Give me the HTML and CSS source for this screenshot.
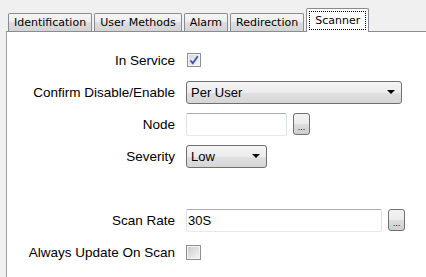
FILE: index.html
```html
<!DOCTYPE html>
<html lang="en">
<head>
  <meta charset="UTF-8" />
  <title>Scanner Properties</title>
  <link rel="stylesheet" href="styles.css">
</head>
<body>
  <div class="window">
    <div class="tabs">
      <div class="tab">Identification</div>
      <div class="tab">User Methods</div>
      <div class="tab">Alarm</div>
      <div class="tab">Redirection</div>
      <div class="tab active"><span class="focus">Scanner</span></div>
    </div>
    <div class="panel">
      <div class="form">
        <div class="label">In Service</div>
        <div class="field">
          <span class="check first">
            <svg width="12" height="12" viewBox="0 0 12 12"><path d="M2.5 6.5 L4.8 9.2 L9.8 2.2" fill="none" stroke="#3b57a3" stroke-width="1.8"/></svg>
          </span>
        </div>

        <div class="label">Confirm Disable/Enable</div>
        <div class="field">
          <div class="select wide">
            <span>Per User</span>
            <svg class="arrow" width="8" height="4" viewBox="0 0 8 4"><polygon points="0,0 8,0 4,4" fill="#000"/></svg>
          </div>
        </div>

        <div class="label">Node</div>
        <div class="field">
          <div class="text node"></div>
          <div class="dots">...</div>
        </div>

        <div class="label">Severity</div>
        <div class="field">
          <div class="select short">
            <span>Low</span>
            <svg class="arrow" width="8" height="4" viewBox="0 0 8 4"><polygon points="0,0 8,0 4,4" fill="#000"/></svg>
          </div>
        </div>

        <div class="spacer"></div>

        <div class="label">Scan Rate</div>
        <div class="field">
          <div class="text rate">30S</div>
          <div class="dots">...</div>
        </div>

        <div class="label">Always Update On Scan</div>
        <div class="field">
          <span class="check"></span>
        </div>
      </div>
    </div>
  </div>
</body>
</html>
```

FILE: styles.css
```css
/* Base */
* {
  margin: 0;
  padding: 0;
  box-sizing: border-box;
}
body {
  background: #f0f0f0;
  width: 426px;
  height: 277px;
  overflow: hidden;
  font-family: 'Liberation Sans', Arial, sans-serif;
  font-size: 13px;
  color: #000;
}
.window {
  padding-left: 6px;
}
/* Tab strip */
.tabs {
  display: flex;
  align-items: flex-end;
  height: 31px;
  padding-left: 2px;
}
.tab {
  height: 18px;
  padding: 0 5px;
  margin-right: 2px;
  border: 1px solid #898c95;
  border-bottom: none;
  border-radius: 2px 2px 0 0;
  background: linear-gradient(#f5f5f5, #ededed 50%, #dedede 50%, #d3d3d3);
  font-family: 'DejaVu Sans', Verdana, sans-serif;
  font-size: 11px;
  line-height: 17px;
  white-space: nowrap;
}
.tab.active {
  position: relative;
  z-index: 1;
  height: 24px;
  margin-bottom: -1px;
  padding: 2px 2px 0;
  background: #fff;
}
.tab .focus {
  display: block;
  border: 1px dotted #000;
  padding: 0 5px;
  line-height: 17px;
}
/* Panel */
.panel {
  width: 420px;
  height: 246px;
  background: #fff;
  border-top: 1px solid #898c95;
  border-left: 1px solid #a0a0a0;
  padding-top: 12px;
}
.form {
  display: grid;
  grid-template-columns: 168px auto;
  grid-auto-rows: 32px;
  column-gap: 11px;
  align-items: center;
}
.form .spacer {
  grid-column: 1 / 3;
  height: 36px;
}
.label {
  text-align: right;
  white-space: nowrap;
  font-size: 13.5px;
}
.field {
  display: flex;
  align-items: center;
}
/* Controls */
.check {
  display: flex;
  align-items: center;
  justify-content: center;
  width: 15px;
  height: 15px;
  border: 1px solid #8e8f8f;
  box-shadow: inset 0 0 0 1px #f4f4f4;
  background: linear-gradient(135deg, #cbcbcb, #f6f6f6);
}
.check.first {
  width: 14px;
  height: 14px;
  margin-left: 1px;
  background: linear-gradient(135deg, #d3d7df, #f7f7f7);
}
.select {
  display: flex;
  align-items: center;
  justify-content: space-between;
  height: 23px;
  padding: 0 6px 0 4px;
  border: 1px solid #707070;
  border-radius: 3px;
  background: linear-gradient(#f5f5f5, #ececec 50%, #e0e0e0 50%, #d6d6d6);
}
.select.wide {
  width: 216px;
}
.select.short {
  width: 81px;
}
.text {
  height: 23px;
  padding-left: 1px;
  line-height: 21px;
  border: 1px solid;
  border-color: #abadb3 #dbdfe6 #e3e9ef #e2e3ea;
  border-radius: 2px;
  background: #fff;
}
.text.node {
  width: 101px;
}
.text.rate {
  width: 196px;
}
.dots {
  width: 17px;
  height: 22px;
  margin-left: 6px;
  border: 1px solid #707070;
  border-radius: 3px;
  background: linear-gradient(#f3f3f3, #ebebeb 50%, #dddddd 50%, #cfcfcf);
  font-size: 9px;
  line-height: 9px;
  text-align: center;
  padding-top: 9px;
}
```
